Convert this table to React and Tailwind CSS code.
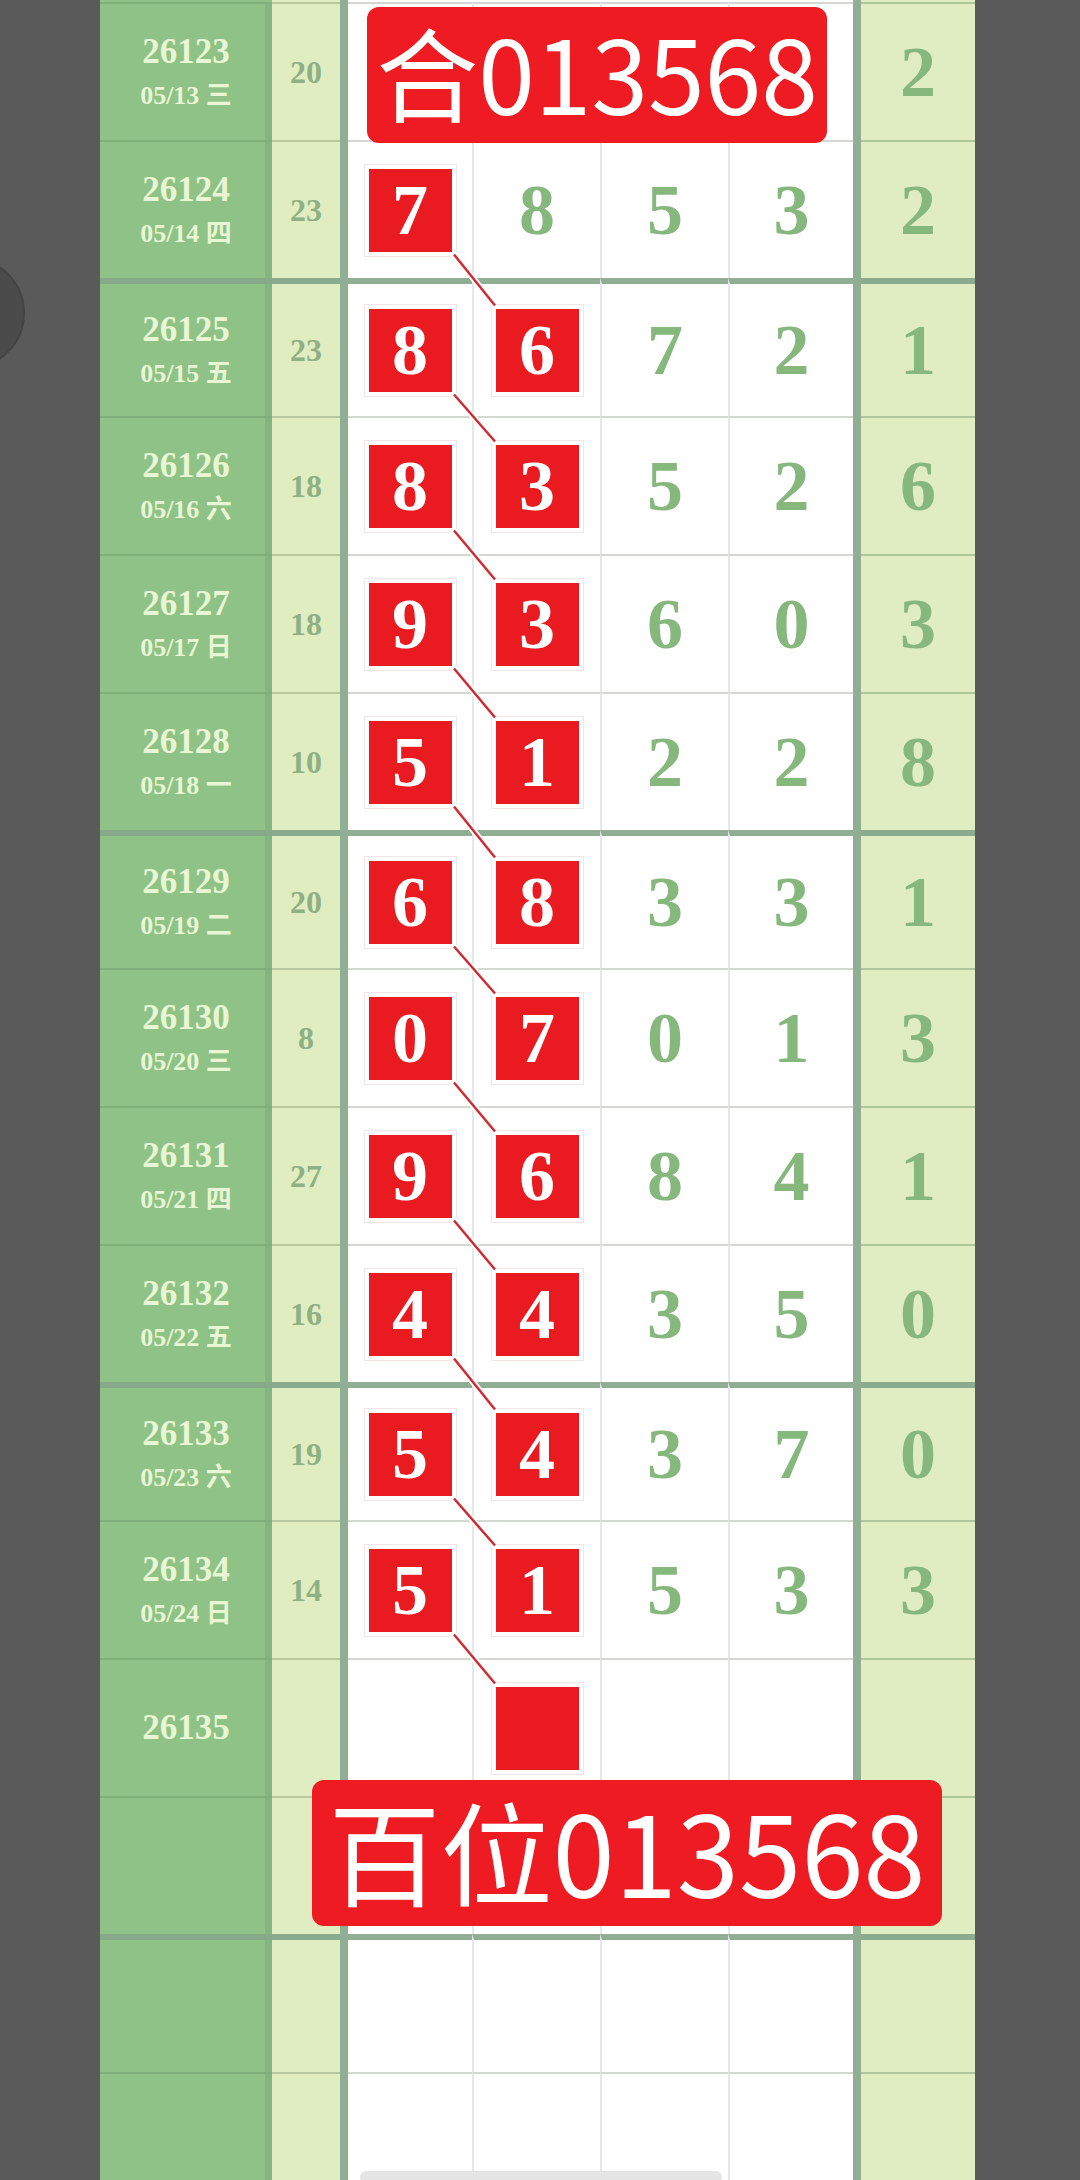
const rows = [
  { id: "26123", date: "05/13 三", sum: "20", d: ["", "", "", ""], red: [], r: "2" },
  { id: "26124", date: "05/14 四", sum: "23", d: ["7", "8", "5", "3"], red: [0], r: "2" },
  { id: "26125", date: "05/15 五", sum: "23", d: ["8", "6", "7", "2"], red: [0, 1], r: "1" },
  { id: "26126", date: "05/16 六", sum: "18", d: ["8", "3", "5", "2"], red: [0, 1], r: "6" },
  { id: "26127", date: "05/17 日", sum: "18", d: ["9", "3", "6", "0"], red: [0, 1], r: "3" },
  { id: "26128", date: "05/18 一", sum: "10", d: ["5", "1", "2", "2"], red: [0, 1], r: "8" },
  { id: "26129", date: "05/19 二", sum: "20", d: ["6", "8", "3", "3"], red: [0, 1], r: "1" },
  { id: "26130", date: "05/20 三", sum: "8", d: ["0", "7", "0", "1"], red: [0, 1], r: "3" },
  { id: "26131", date: "05/21 四", sum: "27", d: ["9", "6", "8", "4"], red: [0, 1], r: "1" },
  { id: "26132", date: "05/22 五", sum: "16", d: ["4", "4", "3", "5"], red: [0, 1], r: "0" },
  { id: "26133", date: "05/23 六", sum: "19", d: ["5", "4", "3", "7"], red: [0, 1], r: "0" },
  { id: "26134", date: "05/24 日", sum: "14", d: ["5", "1", "5", "3"], red: [0, 1], r: "3" },
  { id: "26135", date: "", sum: "", d: ["", "", "", ""], red: [1], r: "" },
  { id: "", date: "", sum: "", d: ["", "", "", ""], red: [], r: "" },
  { id: "", date: "", sum: "", d: ["", "", "", ""], red: [], r: "" },
  { id: "", date: "", sum: "", d: ["", "", "", ""], red: [], r: "" },
];

const THICK = [2, 6, 10, 14];
const widths = ["w-[124px]", "w-[128px]", "w-[128px]", "w-[125px]"];

// top edge of each row inside the table, 2px stub first
const rowTop = (i) => 2 + 138 * i;
const boxTop = (i) => rowTop(i) + (THICK.includes(i) ? 6 + 24.5 : 2 + 26.5);

function RedBox({ v }) {
  return (
    <div className="flex h-[83px] w-[83px] items-center justify-center bg-[#ea1a21] shadow-[0_0_0_4px_#fff,0_0_0_5px_#f5e4e4] text-[72px] font-bold leading-none text-white">
      {v}
    </div>
  );
}

function Row({ row, i }) {
  const thick = THICK.includes(i);
  const bt = thick ? "border-t-[6px]" : "border-t-2";
  return (
    <div className="relative flex h-[138px]">
      <div
        className={`${bt} ${thick ? "border-[#86aa8a]" : "border-[#80b079]"} flex w-[172px] flex-col items-center justify-center bg-[#8ec286] text-[#e9f6d3] shadow-[inset_-7px_0_0_#86b67f] font-bold`}
      >
        {row.id && <div className="text-[35px] leading-[48px]">{row.id}</div>}
        {row.date && <div className="text-[26px] leading-[40px]">{row.date}</div>}
      </div>
      <div
        className={`${bt} ${thick ? "border-[#8aab8f]" : "border-[#b6c79d]"} flex w-[68px] items-center justify-center bg-[#e0edc0] text-[32px] font-bold text-[#8eb083]`}
      >
        {row.sum}
      </div>
      <div className="w-[8px] bg-[#8fae94]" />
      {row.d.map((v, c) => (
        <div
          key={c}
          className={`${bt} ${thick ? "border-t-[#8fae94]" : "border-t-[#d3d8d3]"} ${c > 0 ? "border-l-2 border-l-[#e6e8e6]" : ""} ${widths[c]} flex items-center justify-center bg-white text-[72px] font-bold text-[#86b77d]`}
        >
          {row.red.includes(c) ? <RedBox v={v} /> : v}
        </div>
      ))}
      <div className="w-[8px] bg-[#8fae94]" />
      <div
        className={`${bt} ${thick ? "border-[#8aab8f]" : "border-[#b3c59b]"} flex w-[114px] items-center justify-center bg-[#e0edc0] text-[72px] font-bold text-[#86b77d]`}
      >
        {row.r}
      </div>
      {i === 0 && (
        <div className="absolute left-[267px] top-[5px] z-10 flex h-[136px] w-[460px] items-center justify-center rounded-[12px] bg-[#ee1b22] pb-[8px] font-['Noto_Sans_CJK_SC',sans-serif] text-[102px] font-normal leading-[1.2] text-white">
          合013568
        </div>
      )}
      {i === 13 && (
        <div className="absolute left-[212px] top-[-16px] z-10 flex h-[146px] w-[630px] items-center justify-center rounded-[12px] bg-[#ee1b22] pb-[8px] font-['Noto_Sans_CJK_SC',sans-serif] text-[112px] font-normal leading-[1.2] text-white">
          百位013568
        </div>
      )}
    </div>
  );
}

export default function App() {
  const links = [];
  for (let i = 1; i <= 11; i++) {
    links.push({ y1: boxTop(i) + 83 + 3, y2: boxTop(i + 1) - 3 });
  }
  return (
    <div className="relative h-[2180px] w-[1080px] overflow-hidden bg-[#5a5a5a] font-['Liberation_Serif','Noto_Sans_CJK_SC',serif]">
      <div className="absolute left-[-87px] top-[257px] h-[112px] w-[112px] rounded-full border-2 border-[#444] bg-[#4b4b4b]" />

      <div className="relative ml-[100px] w-[875px]">
        <div className="flex h-[2px]">
          <div className="w-[172px] bg-[#8ec286]" />
          <div className="w-[68px] bg-[#e0edc0]" />
          <div className="w-[8px] bg-[#8fae94]" />
          <div className="w-[505px] bg-white" />
          <div className="w-[8px] bg-[#8fae94]" />
          <div className="w-[114px] bg-[#e0edc0]" />
        </div>
        {rows.map((row, i) => (
          <Row key={i} row={row} i={i} />
        ))}

        <svg className="pointer-events-none absolute left-0 top-0" width="875" height="2180">
          {links.map((l, k) => (
            <g key={k}>
              <line x1="354" y1={l.y1} x2="395" y2={l.y2} stroke="#fff" strokeWidth="6" />
              <line x1="354" y1={l.y1} x2="395" y2={l.y2} stroke="#d02a33" strokeWidth="2.5" />
            </g>
          ))}
        </svg>
      </div>

      <div className="absolute left-[360px] top-[2171px] h-[12px] w-[362px] rounded-full bg-[#e5e5e5]" />
    </div>
  );
}
